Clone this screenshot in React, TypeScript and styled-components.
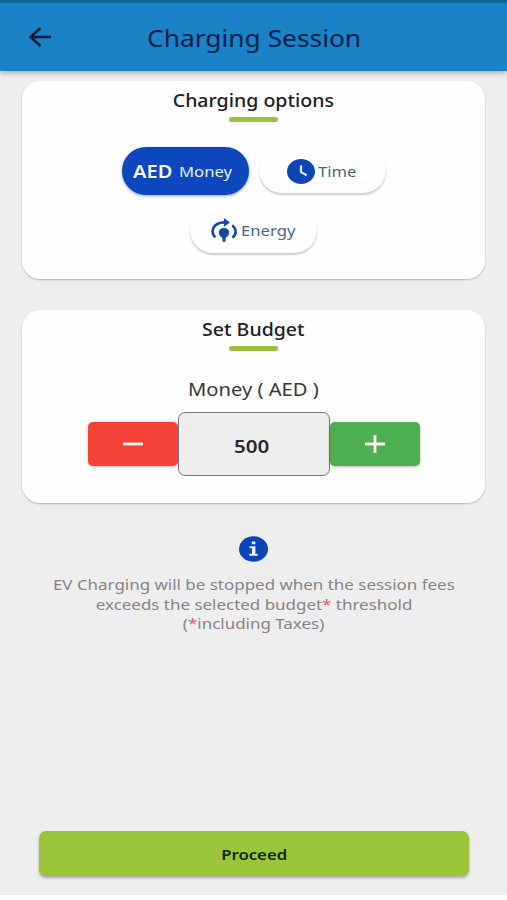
import React from 'react';
import styled, { createGlobalStyle } from 'styled-components';

const GlobalStyle = createGlobalStyle`
  *, *::before, *::after { box-sizing: border-box; }
  body {
    margin: 0;
    background: #fff;
    font-family: "Noto Sans", "Open Sans", sans-serif;
  }
  button { font: inherit; margin: 0; padding: 0; border: 0; cursor: pointer; }
  h1, h2, p { margin: 0; font-weight: 400; }
`;

const Screen = styled.div`
  width: 507px;
  height: 895px;
  background: #eee;
  display: flex;
  flex-direction: column;
  align-items: center;
`;

const Header = styled.header`
  width: 100%;
  height: 71px;
  flex: none;
  display: grid;
  grid-template-columns: 80px 1fr 80px;
  align-items: center;
  justify-items: center;
  border-top: 3px solid #12669c;
  background: #1b82c6;
  box-shadow: 0 2px 5px rgba(60, 90, 90, 0.45);
`;

const BackButton = styled.button`
  display: flex;
  background: none;
`;

/* Extended-width lettering used throughout the app. */
const Wide = styled.span<{ $size: number; $weight?: number; $stretch?: number }>`
  display: inline-block;
  flex: none;
  white-space: nowrap;
  font-size: ${(p) => p.$size}px;
  font-weight: ${(p) => p.$weight ?? 400};
  transform: scaleX(${(p) => p.$stretch ?? 1.13});
`;

const Title = styled.h1`
  display: flex;
  padding: 2px 0 0 1px;
  line-height: 30px;
  color: #08204a;
`;

const Card = styled.section<{ $gap: number; $height: number }>`
  width: 463px;
  height: ${(p) => p.$height}px;
  flex: none;
  margin-top: ${(p) => p.$gap}px;
  padding-top: 8px;
  border-radius: 18px;
  background: #fefefe;
  box-shadow: 0 1px 2px rgba(0, 0, 0, 0.24);
  display: flex;
  flex-direction: column;
  align-items: center;
`;

const CardTitle = styled.h2`
  display: flex;
  flex-direction: column;
  align-items: center;
  line-height: 24px;
  color: #202024;
  &::after {
    content: "";
    width: 49px;
    height: 5px;
    margin-top: 4px;
    border-radius: 3px;
    background: #9bc23c;
  }
`;

const Options = styled.div`
  width: 300px;
  margin-top: 25px;
  display: flex;
  flex-wrap: wrap;
  justify-content: center;
  gap: 12px 10px;
`;

const Option = styled.button<{ $active?: boolean; $inset: number; $gap: number }>`
  width: 127px;
  height: 48px;
  display: flex;
  align-items: center;
  padding-left: ${(p) => p.$inset}px;
  gap: ${(p) => p.$gap}px;
  border-radius: 24px;
  line-height: 24px;
  color: ${(p) => (p.$active ? '#e6eefc' : '#3f6791')};
  background: ${(p) => (p.$active ? '#0d47bd' : '#fefefe')};
  box-shadow: ${(p) => (p.$active ? '0 1px 3px rgba(13, 71, 189, 0.5)' : '0 2px 2px rgba(0, 0, 0, 0.2)')};
  ${Wide} { transform-origin: left center; }
  &:nth-child(2) { height: 46px; padding-top: 2px; }
  &:nth-child(3) { height: 46px; }
  svg { flex: none; }
`;

const Unit = styled(Wide)`
  width: 41px;
  text-align: left;
  color: #f2f6ff;
`;

const FieldLabel = styled.p`
  margin-top: 24px;
  line-height: 28px;
  color: #37373b;
`;

const Stepper = styled.div`
  margin-top: 8px;
  display: flex;
  align-items: center;
`;

const StepButton = styled.button<{ $color: string }>`
  width: 90px;
  height: 44px;
  display: flex;
  align-items: center;
  justify-content: center;
  border-radius: 5px;
  background: ${(p) => p.$color};
  box-shadow: 0 1px 3px rgba(0, 0, 0, 0.28);
`;

const Amount = styled.output`
  width: 152px;
  height: 64px;
  display: flex;
  align-items: center;
  justify-content: center;
  padding: 4px 4px 0 0;
  border: 1px solid #77777a;
  border-radius: 7px;
  background: #eee;
  color: #29292c;
`;

const Info = styled.div`
  flex: 1;
  padding-top: 33px;
  display: flex;
  flex-direction: column;
  align-items: center;
`;

const Note = styled.p`
  margin-top: 13px;
  padding-left: 1px;
  display: flex;
  flex-direction: column;
  align-items: center;
  line-height: 19.5px;
  color: #858587;
`;

const Star = styled.span`
  color: #e85c5c;
`;

const Proceed = styled.button`
  width: 430px;
  height: 45px;
  flex: none;
  margin: 0 0 19px 1px;
  border-radius: 7px;
  background: #9dc53a;
  color: #142708;
  box-shadow: 0 2px 3px rgba(0, 0, 0, 0.3);
`;

const BackIcon = () => (
  <svg width="24" height="20" viewBox="0 0 24 20" fill="none" stroke="#071c35" strokeWidth="2.4">
    <path d="M23 10H3M12.500 1 2.500 10 12.500 19" />
  </svg>
);

const ClockIcon = () => (
  <svg width="28" height="25" viewBox="0 0 28 25">
    <ellipse cx="14" cy="12.5" rx="14" ry="12.5" fill="#0d45b8" />
    <path d="M14 6.500v6.700l5.700 3" fill="none" stroke="#e4edff" strokeWidth="2.200" />
  </svg>
);

const EnergyIcon = () => (
  <svg width="26" height="25" viewBox="0 0 26 25" fill="none" stroke="#174a9e" strokeWidth="2.600">
    <path d="M4.200 19.500C1.500 16.500 0.900 13 2.500 9.800 4.500 6 8.500 4.300 14 4.400M21.300 7.300C25.700 11 25.700 16.500 21.500 19.800" />
    <path d="M13 0 19 4.400 13 8.800Z" fill="#174a9e" stroke="none" />
    <path d="M13 10c-3.200 0-5.200 1.900-5.200 4.400 0 2.400 1.800 4 3.600 5.600V23.800h3.200V20c1.800-1.600 3.600-3.200 3.600-5.600 0-2.500-2-4.400-5.200-4.400Z" fill="#174a9e" stroke="none" />
  </svg>
);

const SignIcon = ({ plus }: { plus?: boolean }) => (
  <svg width="20" height="18" viewBox="0 0 20 18" stroke="#fff5f2" strokeWidth="2.800">
    <path d={plus ? 'M0 9h20M10 0v18' : 'M0 9h20'} />
  </svg>
);

const InfoIcon = () => (
  <svg width="29" height="26" viewBox="0 0 29 26">
    <ellipse cx="14.500" cy="13" rx="14.500" ry="12.800" fill="#0d45b8" />
    <path d="M12.800 5.400h3.600v2.800h-3.600ZM10.600 10.300h5.800v7.500h2.300v2h-8.300v-2h2.600v-5.500h-2.400Z" fill="#e8efff" />
  </svg>
);

export default function App() {
  return (
    <>
      <GlobalStyle />
      <Screen>
        <Header>
          <BackButton aria-label="Back"><BackIcon /></BackButton>
          <Title><Wide $size={23.4} $stretch={1.125}>Charging Session</Wide></Title>
        </Header>

        <Card $gap={10} $height={198}>
          <CardTitle><Wide $size={17.3} $weight={500}>Charging options</Wide></CardTitle>
          <Options>
            <Option $active $inset={11} $gap={5}>
              <Unit $size={17.6} $weight={600} $stretch={1.14}>AED</Unit>
              <Wide $size={15} $stretch={1.11}>Money</Wide>
            </Option>
            <Option $inset={28} $gap={3}>
              <ClockIcon />
              <Wide $size={15} $stretch={1.11}>Time</Wide>
            </Option>
            <Option $inset={21} $gap={4}>
              <EnergyIcon />
              <Wide $size={15} $stretch={1.11}>Energy</Wide>
            </Option>
          </Options>
        </Card>

        <Card $gap={31} $height={193}>
          <CardTitle><Wide $size={17.3} $weight={500}>Set Budget</Wide></CardTitle>
          <FieldLabel><Wide $size={18} $stretch={1.12}>Money ( AED )</Wide></FieldLabel>
          <Stepper>
            <StepButton $color="#f44336" aria-label="Decrease"><SignIcon /></StepButton>
            <Amount><Wide $size={18.2} $weight={600} $stretch={1.13}>500</Wide></Amount>
            <StepButton $color="#4caf50" aria-label="Increase"><SignIcon plus /></StepButton>
          </Stepper>
        </Card>

        <Info>
          <InfoIcon />
          <Note>
            <Wide $size={15}>EV Charging will be stopped when the session fees</Wide>
            <Wide $size={15}>exceeds the selected budget<Star>*</Star> threshold</Wide>
            <Wide $size={15}>(<Star>*</Star>including Taxes)</Wide>
          </Note>
        </Info>

        <Proceed><Wide $size={14.8} $weight={600}>Proceed</Wide></Proceed>
      </Screen>
    </>
  );
}
